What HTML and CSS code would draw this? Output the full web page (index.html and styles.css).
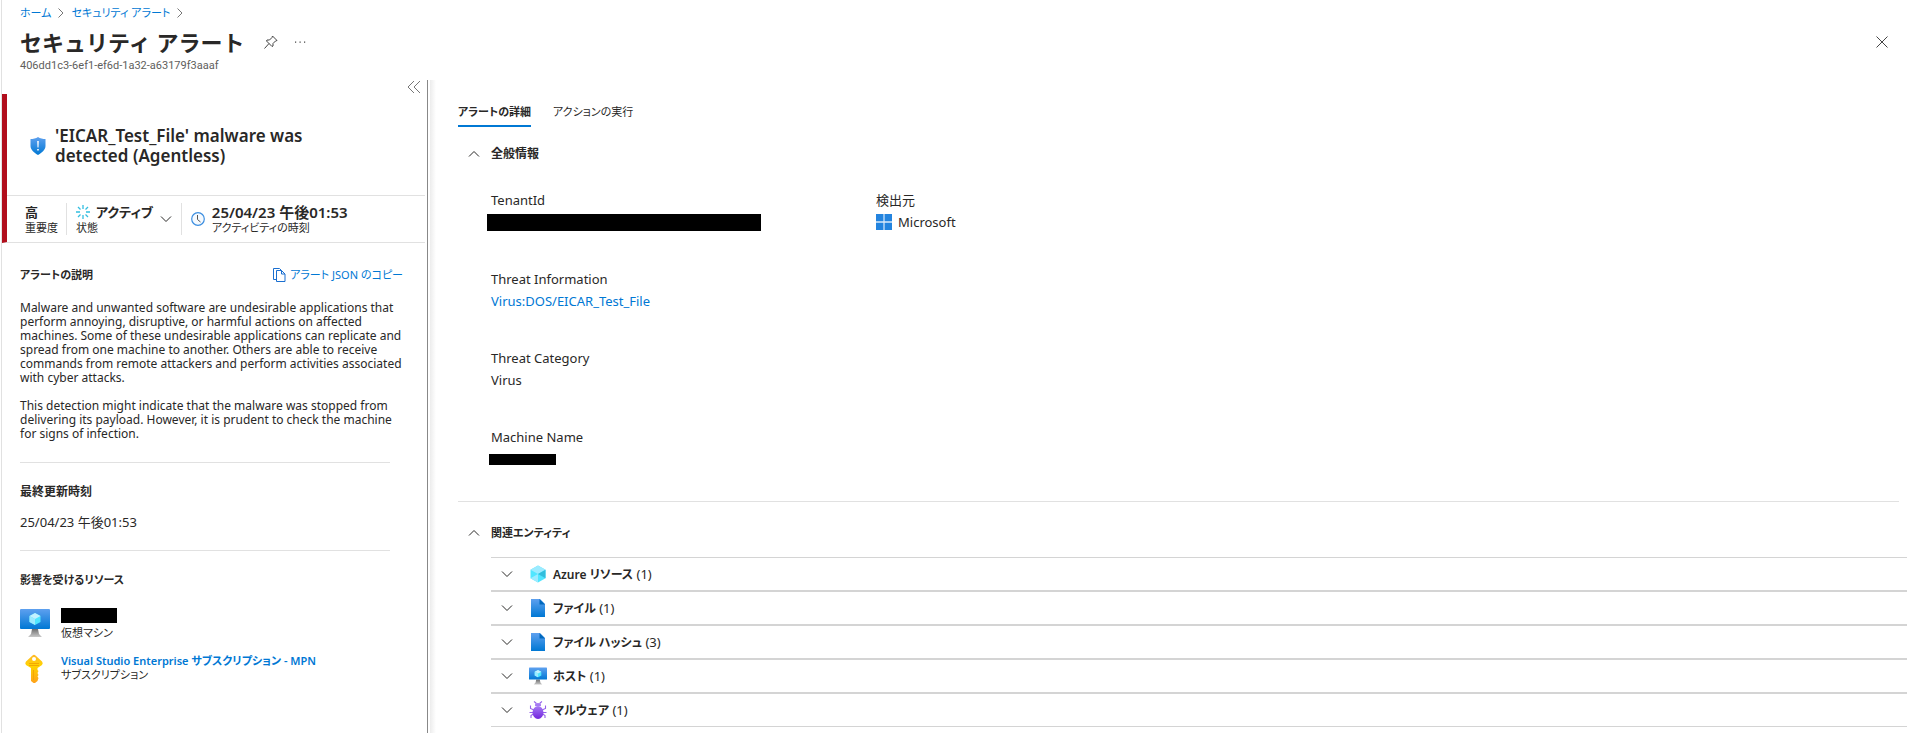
FILE: index.html
```html
<!DOCTYPE html>
<html lang="ja">
<head>
<meta charset="utf-8">
<meta name="viewport" content="width=device-width, initial-scale=1">
<title>セキュリティ アラート</title>
<link rel="stylesheet" href="styles.css">
</head>
<body>
<svg class="defs" aria-hidden="true">
  <defs>
    <linearGradient id="blue" x1="0" y1="0" x2="0" y2="1"><stop offset="0" stop-color="#5ea0ef"/><stop offset="1" stop-color="#0078d4"/></linearGradient>
    <linearGradient id="gold" x1="0" y1="0" x2="0" y2="1"><stop offset="0" stop-color="#ffb82a"/><stop offset=".4" stop-color="#ffd400"/><stop offset="1" stop-color="#fea11b"/></linearGradient>
    <linearGradient id="purple" x1="0" y1="0" x2="0" y2="1"><stop offset="0" stop-color="#a67af4"/><stop offset="1" stop-color="#7324dd"/></linearGradient>
    <linearGradient id="gray" x1="0" y1="0" x2="0" y2="1"><stop offset="0" stop-color="#707070"/><stop offset="1" stop-color="#c8c8c8"/></linearGradient>
    <symbol id="down" viewBox="0 0 12 12"><path d="M1 3.5l5 5 5-5" fill="none" stroke="currentColor"/></symbol>
    <symbol id="up" viewBox="0 0 12 12"><path d="M1 8.5l5-5 5 5" fill="none" stroke="currentColor"/></symbol>
    <symbol id="right" viewBox="0 0 12 12"><path d="M3.5 1.5l4.500 4.500-4.500 4.500" fill="none" stroke="currentColor"/></symbol>
    <symbol id="cube" viewBox="0 0 18 18"><path d="M9 .5l7.500 4.300v8.500L9 17.500l-7.500-4.200V4.800z" fill="#50e6ff"/><path d="M9 .5l7.500 4.300L9 9 1.500 4.800z" fill="#9cebff"/><path d="M16.500 4.800v8.500L9 9z" fill="#32bedd"/><path d="M1.500 13.300L9 9v8.500z" fill="#9cebff"/></symbol>
    <symbol id="file" viewBox="0 0 18 18"><path d="M2 0h9l5 5v13H2z" fill="url(#blue)"/><path d="M10.500 0L16 5.500h-5.500z" fill="#0068bd"/></symbol>
    <symbol id="vm" viewBox="0 0 30 28"><path d="M12 20h6l1 5 3 3H8l3-3z" fill="url(#gray)"/><rect y="0" width="30" height="20" rx="1" fill="url(#blue)"/><path d="M15 4l5.500 3v6L15 16l-5.500-3V7z" fill="#50e6ff"/><path d="M15 4l5.500 3-5.500 3-5.500-3z" fill="#c3f1ff"/><path d="M9.500 7l5.500 3v6l-5.500-3z" fill="#9cebff"/></symbol>
    <symbol id="bug" viewBox="0 0 18 18"><path d="M5 .5l2 1.500v2M13 .5l-2 1.500v2M1.500 4.500v3L5 9M16.500 4.500v3L13 9M.5 11.500h17M2 17v-2.500l3-2M16 17v-2.500l-3-2" fill="none" stroke="#9560ea" stroke-width="1.100"/><path d="M6 5a3 3 0 016 0z" fill="#a67af4"/><ellipse cx="9" cy="11.500" rx="5.500" ry="6.500" fill="url(#purple)"/></symbol>
  </defs>
</svg>

<div class="blade">
  <header class="top">
    <nav class="crumbs" aria-label="階層リンク">
      <a href="#home">ホーム</a><svg class="i12"><use href="#right"/></svg>
      <a href="#alerts">セキュリティ アラート</a><svg class="i12"><use href="#right"/></svg>
    </nav>
    <div class="titlebar">
      <h1>セキュリティ アラート</h1>
      <button class="icon-btn" aria-label="ピン留め"><svg class="i14" viewBox="0 0 14 14"><path d="M8.500 1l4.500 4.500-1.500.5L9 8.500v2.500l-1 .5-5.500-5.500.5-1h2.500L8 2.500zM5 8.500L.5 13.500" fill="none" stroke="currentColor" stroke-linejoin="round"/></svg></button>
      <button class="icon-btn" aria-label="その他"><svg class="i12" viewBox="0 0 12 12"><path d="M1 5.500h1.200v1.200H1zM5.500 5.500h1.200v1.200H5.500zM10 5.500h1.200v1.200H10z" fill="currentColor"/></svg></button>
      <button class="icon-btn close" aria-label="閉じる"><svg class="i12" viewBox="0 0 12 12"><path d="M.5.5l11 11M11.500.5l-11 11" stroke="currentColor"/></svg></button>
    </div>
    <p class="alert-id">406dd1c3-6ef1-ef6d-1a32-a63179f3aaaf</p>
  </header>

  <div class="columns">
    <aside class="side">
      <button class="icon-btn collapse" aria-label="折りたたむ"><svg class="i14" viewBox="0 0 14 14"><path d="M7 1L1 7l6 6M13 1L7 7l6 6" fill="none" stroke="currentColor"/></svg></button>
      <section class="summary">
        <div class="summary-title">
          <svg class="i18" viewBox="0 0 18 18"><path d="M9 0c2 1.500 5 2 7.500 2v7c0 4-4 7-7.500 9-3.500-2-7.500-5-7.500-9V2C4 2 7 1.500 9 0z" fill="url(#blue)"/><path d="M8.200 4h1.600l-.3 6.500h-1zM8.200 12h1.600v1.500H8.200z" fill="#fff"/></svg>
          <h2>'EICAR_Test_File' malware was detected (Agentless)</h2>
        </div>
        <div class="stats">
          <div class="stat"><strong>高</strong><span>重要度</span></div>
          <button class="stat status">
            <span class="status-text"><span class="status-line"><svg class="i14" viewBox="0 0 14 14"><path d="M7 0v4M7 10v4M0 7h4M10 7h4M2 2l2.500 2.500M9.500 9.500L12 12M12 2L9.500 4.500M4.500 9.500L2 12" stroke="#32bee0" stroke-width="1.300"/></svg><strong>アクティブ</strong></span><span>状態</span></span>
            <svg class="i12"><use href="#down"/></svg>
          </button>
          <div class="stat time">
            <svg class="i14" viewBox="0 0 14 14"><circle cx="7" cy="7" r="6.300" fill="#f5faff" stroke="#3c8ee0" stroke-width="1.200"/><path d="M6.500 3v4.500l3 2.500" fill="none" stroke="#555"/></svg>
            <div><strong>25/04/23 午後01:53</strong><span>アクティビティの時刻</span></div>
          </div>
        </div>
      </section>
      <div class="side-body">
        <section class="block">
          <div class="block-head"><h3 class="kana">アラートの説明</h3>
            <button class="copy"><svg class="i14" viewBox="0 0 14 14"><path d="M4.500 2.500h5l3.500 3.500v7.500H4.500zM9.500 2.500V6H13M4.500 11.500H1.500V.5h6l2 2" fill="none" stroke="#1a6fd0"/></svg>アラート JSON のコピー</button></div>
          <p class="desc">Malware and unwanted software are undesirable applications that perform annoying, disruptive, or harmful actions on affected machines. Some of these undesirable applications can replicate and spread from one machine to another. Others are able to receive commands from remote attackers and perform activities associated with cyber attacks.</p>
          <p class="desc">This detection might indicate that the malware was stopped from delivering its payload. However, it is prudent to check the machine for signs of infection.</p>
        </section>
        <section class="block"><h3>最終更新時刻</h3><p class="updated">25/04/23 午後01:53</p></section>
        <section class="block"><h3 class="kana">影響を受けるリソース</h3>
          <ul class="resources">
            <li><svg class="res-icon"><use href="#vm"/></svg><div><span class="redacted res-name"></span><span>仮想マシン</span></div></li>
            <li><svg class="res-icon" viewBox="0 0 30 30"><path d="M12.500 1.500q1.500-1.500 3 0l6.500 6q1.500 1.500 0 3.500L17.500 14v2l1 1-1 2 1 2-1 1.500 1 1.500-1 3-2.500 2h-1.500L11 27V14l-5-3q-1.500-2 0-3.500z" fill="url(#gold)"/><circle cx="14" cy="5" r="2" fill="#fff"/><path d="M9 9.500h10M9 11.500h10M13.500 16v10" stroke="#f5a800"/></svg><div><a href="#subscription">Visual Studio Enterprise サブスクリプション - MPN</a><span>サブスクリプション</span></div></li>
          </ul>
        </section>
      </div>
    </aside>

    <main class="main">
      <div class="tabs" role="tablist">
        <button class="tab selected" role="tab" aria-selected="true">アラートの詳細</button>
        <button class="tab" role="tab" aria-selected="false">アクションの実行</button>
      </div>
      <section class="general">
        <button class="section-head" aria-expanded="true"><svg class="i12"><use href="#up"/></svg>全般情報</button>
        <dl class="facts">
          <div><dt>TenantId</dt><dd><span class="redacted tenant"></span></dd></div>
          <div><dt>検出元</dt><dd class="vendor"><svg class="i16" viewBox="0 0 16 16"><path d="M0 0h16v16H0z" fill="#8fc1f0"/><path d="M0 0h7v7.500H0zM9 0h7v7.500H9zM0 8.500h7V16H0zM9 8.500h7V16H9z" fill="#2384df"/><path d="M0 8h16" stroke="#fff"/></svg>Microsoft</dd></div>
          <div><dt>Threat Information</dt><dd><a href="#threat">Virus:DOS/EICAR_Test_File</a></dd></div>
          <div class="first"><dt>Threat Category</dt><dd>Virus</dd></div>
          <div class="first"><dt>Machine Name</dt><dd><span class="redacted machine"></span></dd></div>
        </dl>
      </section>
      <section class="related">
        <button class="section-head kana" aria-expanded="true"><svg class="i12"><use href="#up"/></svg>関連エンティティ</button>
        <ul class="entities">
          <li><button class="entity"><svg class="i12"><use href="#down"/></svg><svg class="i18"><use href="#cube"/></svg><span><b>Azure リソース</b> (1)</span></button></li>
          <li><button class="entity"><svg class="i12"><use href="#down"/></svg><svg class="i18"><use href="#file"/></svg><span><b>ファイル</b> (1)</span></button></li>
          <li><button class="entity"><svg class="i12"><use href="#down"/></svg><svg class="i18"><use href="#file"/></svg><span><b>ファイル ハッシュ</b> (3)</span></button></li>
          <li><button class="entity"><svg class="i12"><use href="#down"/></svg><svg class="i18"><use href="#vm"/></svg><span><b>ホスト</b> (1)</span></button></li>
          <li><button class="entity"><svg class="i12"><use href="#down"/></svg><svg class="i18"><use href="#bug"/></svg><span><b>マルウェア</b> (1)</span></button></li>
        </ul>
      </section>
    </main>
  </div>
</div>
</body>
</html>
```
FILE: styles.css
```css
* { box-sizing: border-box; }
body {
  margin: 0;
  background: #fff;
  color: #292827;
  font: 13px/16px "Noto Sans", "Noto Sans CJK JP", sans-serif;
  font-feature-settings: "palt";
}
h1, h2, h3, p, ul, dl, dd { margin: 0; padding: 0; }
ul { list-style: none; }
a { color: #0078d4; text-decoration: none; }
button { border: 0; padding: 0; background: none; color: inherit; font: inherit; font-feature-settings: inherit; text-align: left; cursor: pointer; }
svg { flex: none; display: block; }
.defs { position: absolute; width: 0; height: 0; }
.i12 { width: 12px; height: 12px; }
.i14 { width: 14px; height: 14px; }
.i16 { width: 16px; height: 16px; }
.i18 { width: 18px; height: 18px; }
.redacted { display: block; background: #000; }

.blade { min-height: 100vh; margin-left: 1px; border-left: 1px solid #e1e1e1; display: flex; flex-direction: column; }

.top { padding: 4px 24px 7px 18px; }
.crumbs { display: flex; align-items: center; gap: 4px; height: 18px; font-size: 11px; color: #777; }
.titlebar { display: flex; align-items: center; height: 40px; }
.titlebar h1 { margin-right: 20px; font-size: 22px; line-height: 32px; font-weight: 700; font-feature-settings: normal; }
.icon-btn { display: flex; margin-right: 16px; color: #444; }
.icon-btn.close { margin: 0 0 0 auto; }
.alert-id { font-family: Roboto, "Noto Sans", sans-serif; font-size: 11px; line-height: 14px; margin-top: -3px; color: #605e5c; }

.columns { flex: 1; display: flex; }
.side { width: 426px; flex: none; padding-right: 2px; border-right: 1px solid #888; }
.icon-btn.collapse { margin: 0 4px 0 auto; color: #777; }

.summary { border-left: 5px solid #b10e1c; border-bottom: 1px solid #e1e1e1; }
.summary-title { display: flex; align-items: center; gap: 8px; height: 101px; padding: 2px 64px 0 22px; }
.summary-title h2 { font-size: 17px; line-height: 20px; font-weight: 600; }
.stats { display: flex; align-items: center; height: 47px; border-top: 1px solid #e1e1e1; padding-left: 18px; font-size: 11px; line-height: 14px; }
.stat { height: 32px; padding-right: 8px; border-right: 1px solid #e1e1e1; }
.stat strong { display: block; font-size: 13px; line-height: 18px; font-weight: 600; }
.stat span { display: block; }
.stat.status { display: flex; align-items: center; gap: 7px; padding: 0 9px; }
.stat .status-line { display: flex; align-items: center; gap: 6px; }
.stat.time { display: flex; align-items: center; gap: 7px; padding-left: 9px; border: 0; }
.stat.time strong { font-size: 15px; }

.side-body { padding: 23px 18px 0; }
.block + .block { margin-top: 19px; }
.block + .block::before { content: ""; display: block; margin: 0 17px 20px 0; border-top: 1px solid #e1e1e1; }
.block h3 { font-size: 12px; line-height: 18px; font-weight: 700; }
.block h3.kana { font-size: 11px; }
.block-head { display: flex; justify-content: space-between; padding-right: 4px; }
.copy { display: flex; align-items: center; gap: 4px; color: #0078d4; font-size: 11px; }
.desc { margin-top: 14px; font-size: 12px; line-height: 14px; }
.block-head + .desc { margin-top: 17px; }
.desc:last-child { padding-bottom: 2px; }
.updated { margin-top: 12px; font-size: 13px; line-height: 18px; }
.resources { display: grid; gap: 14px; margin-top: 19px; font-size: 11px; line-height: 14px; }
.resources li { display: flex; gap: 11px; }
.resources a { display: block; font-weight: 600; }
.resources span { display: block; }
.res-icon { width: 30px; height: 30px; }
.resources .res-name { width: 56px; height: 15px; margin-bottom: 3px; }

.main { flex: 1; min-width: 0; padding: 24px 5px 0 28px; background: linear-gradient(90deg, #ececec, #fff 6px); margin-left: 2px; }
.tabs { display: flex; gap: 22px; font-size: 11px; }
.tab { height: 23px; padding-bottom: 5px; border-bottom: 2px solid transparent; }
.tab.selected { border-color: #0078d4; font-weight: 700; }
.section-head { display: flex; align-items: center; gap: 11px; padding-left: 10px; height: 18px; font-size: 12px; font-weight: 700; }
.section-head.kana { font-size: 11px; }
.general { margin-right: 8px; padding: 18px 0 31px; border-bottom: 1px solid #e1e1e1; }
.facts { display: grid; grid-template-columns: 359px 1fr; gap: 35px 26px; margin: 26px 0 0 33px; line-height: 22px; }
.facts > div { height: 44px; }
.facts .first { grid-column: 1; }
.facts dd { height: 22px; display: flex; align-items: center; }
.facts .vendor { gap: 6px; }
.tenant { width: 274px; height: 17px; margin-left: -4px; }
.machine { width: 67px; height: 11px; margin-left: -2px; }

.related { padding-top: 22px; }
.entities { margin: 15px 0 0 33px; border: solid #d4d4d4; border-width: 0 0 1px; }
.entities li + li { border-top: 2px solid #d4d4d4; }
.entities li:first-child { border-top: 1px solid #d4d4d4; }
.entity { display: flex; align-items: center; width: 100%; height: 32px; padding-left: 10px; }
.entity .i18 { margin: 0 6px 0 16px; }
.entity b { font-size: 12px; font-weight: 600; }
```
